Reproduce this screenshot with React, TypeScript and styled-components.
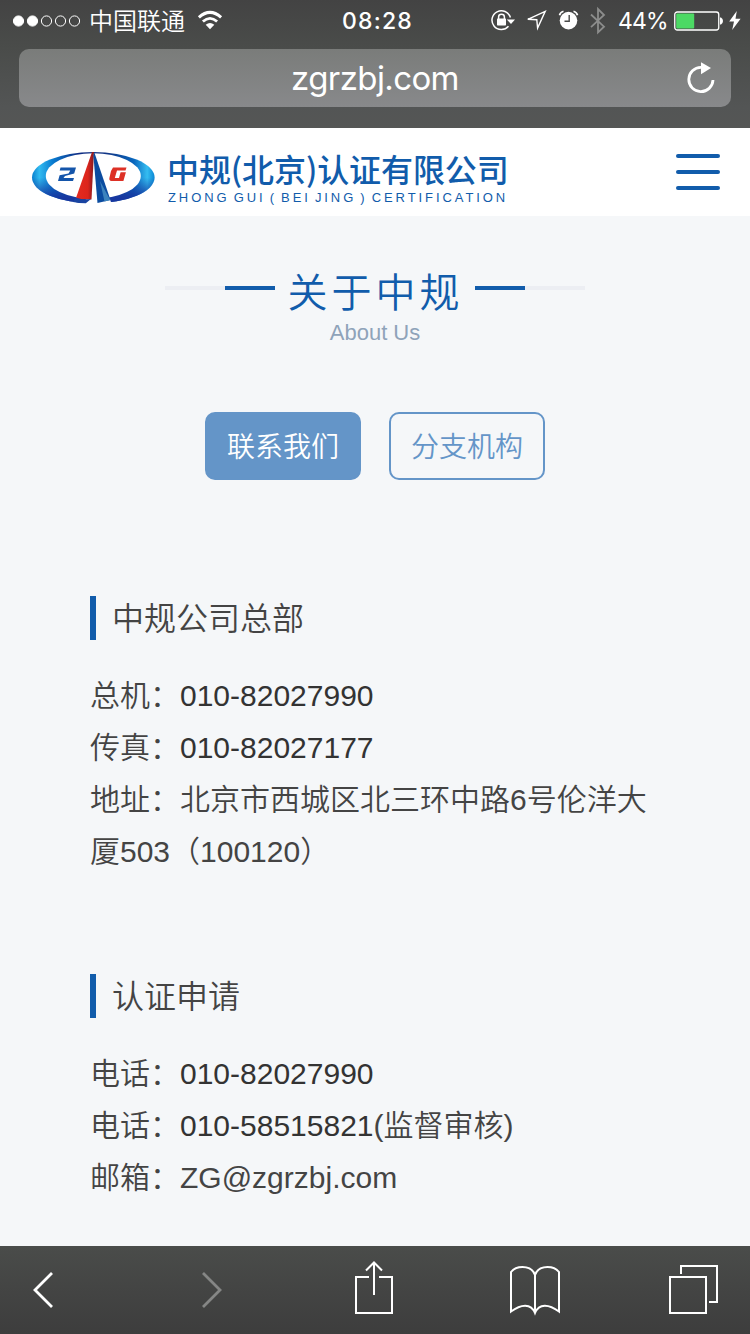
import React from "react";
import styled, { createGlobalStyle } from "styled-components";

const cjk = `"Noto Sans CJK SC", sans-serif`;
const BLUE = "#115cab";

const GlobalStyle = createGlobalStyle`
  body { margin: 0; background: #f5f7f9; }
  * { box-sizing: border-box; }
  svg { display: block; flex: none; overflow: visible; }
`;

const Screen = styled.div`
  width: 750px;
  height: 1334px;
  display: flex;
  flex-direction: column;
  overflow: hidden;
  background: #f5f7f9;
  font-family: "Liberation Sans", ${cjk};
`;

const BrowserTop = styled.header`
  height: 128px;
  flex: none;
  background: linear-gradient(#434343 0, #4a4c4a 48px, #535555 107px, #555655 128px);
`;

const StatusBar = styled.div`
  height: 49px;
  padding-bottom: 8px;
  display: flex;
  align-items: center;
  color: #fff;
`;

const StatusLeft = styled.div`
  width: 342px;
  padding-left: 13px;
  display: flex;
  align-items: center;
`;

const Carrier = styled.span`
  margin: -2px 13px 0 9px;
  font: 400 24px/36px ${cjk};
  font-weight: 350;
`;

const Clock = styled.span`
  width: 148.5px;
  font: 500 23px/36px Inter, sans-serif;
  letter-spacing: 1.2px;
`;

const StatusRight = styled.div`
  display: flex;
  align-items: center;
`;

const Percent = styled.span`
  width: 55.5px;
  margin-left: -0.5px;
  font: 400 23px/36px Inter, sans-serif;
  letter-spacing: -0.9px;
`;

const AddressBar = styled.div`
  height: 58px;
  margin: 0 19px;
  padding: 0 14px 0 44px;
  display: flex;
  align-items: center;
  border-radius: 10px;
  background: linear-gradient(#7a7c7a, #88898b);
  color: #fff;
`;

const Host = styled.span`
  flex: 1;
  text-align: center;
  font: 400 33px/56px Inter, sans-serif;
  letter-spacing: -0.6px;
`;

const SiteHeader = styled.div`
  height: 88px;
  flex: none;
  padding: 0 30px 0 31px;
  display: flex;
  justify-content: space-between;
  align-items: center;
  background: #fff;
`;

const Brand = styled.div`
  display: flex;
  align-items: center;
  color: ${BLUE};
`;

const BrandMark = styled.div`
  padding-top: 13px;
`;

const BrandText = styled.div`
  margin-left: 11px;
  padding-top: 12px;
  white-space: nowrap;
`;

const BrandName = styled.div`
  font: 500 32px/36px ${cjk};
  letter-spacing: -0.1px;
`;

const BrandLatin = styled.div`
  margin: 4px 0 0 1px;
  font: 400 13px/16px "Liberation Sans", sans-serif;
  letter-spacing: 2.92px;
  word-spacing: -2.4px;
`;

const Menu = styled.div`
  height: 36px;
  display: flex;
  flex-direction: column;
  justify-content: space-between;
`;

const MenuLine = styled.i`
  width: 44px;
  height: 4px;
  border-radius: 2px;
  background: ${BLUE};
`;

const Content = styled.main`
  height: 1030px;
  flex: none;
  display: flex;
  flex-direction: column;
  overflow: hidden;
`;

const TitleRow = styled.div`
  margin-top: 46px;
  height: 60px;
  display: flex;
  justify-content: center;
`;

const Rule = styled.div<{ $side: "left" | "right" }>`
  width: 110px;
  height: 4px;
  margin-top: 24px;
  background: linear-gradient(
    to ${(p) => p.$side},
    ${BLUE} 50px,
    #eceef3 50px
  );
`;

const Title = styled.h1`
  width: 200px;
  margin: 0;
  padding-left: 1px;
  text-align: center;
  font: 400 40px/56px ${cjk};
  font-weight: 350;
  letter-spacing: 4px;
  color: ${BLUE};
`;

const Subtitle = styled.div`
  margin-top: -2px;
  text-align: center;
  font-size: 22px;
  line-height: 26px;
  color: #8fa3b9;
`;

const Tabs = styled.div`
  margin-top: 66px;
  display: flex;
  justify-content: center;
  gap: 28px;
`;

const Tab = styled.button<{ $active?: boolean }>`
  width: 156px;
  height: 68px;
  padding: 0 0 2px;
  border: 2px solid #6495c8;
  border-radius: 10px;
  background: ${(p) => (p.$active ? "#6495c8" : "transparent")};
  color: ${(p) => (p.$active ? "#fff" : "#6495c8")};
  font: 400 28px/62px ${cjk};
  font-weight: 350;
`;

const Section = styled.section<{ $top: number }>`
  width: 570px;
  margin: ${(p) => p.$top}px 0 0 90px;
`;

const Heading = styled.h2`
  height: 44px;
  margin: 0 0 30px;
  padding-left: 16px;
  border-left: 6px solid ${BLUE};
  font: 400 32px/41px ${cjk};
  font-weight: 350;
  color: #444;
`;

const Line = styled.p`
  margin: 0;
  font-size: 30px;
  line-height: 52px;
  font-weight: 350;
  color: #444;
`;

const Phone = styled.span`
  color: #333;
`;

const Toolbar = styled.nav`
  height: 88px;
  flex: none;
  display: flex;
  align-items: center;
  background: linear-gradient(#4a4c4a, #3d3d3d);
`;

const Tool = styled.span<{ $gap: number }>`
  width: 52px;
  height: 60px;
  margin-left: ${(p) => p.$gap}px;
`;

const ToolIcon = ({ children, gap, color = "#fff" }: { children: React.ReactNode; gap: number; color?: string }) => (
  <Tool $gap={gap}>
    <svg width="52" height="60" fill="none" stroke={color} strokeWidth="2">
      {children}
    </svg>
  </Tool>
);

const Signal = () => (
  <svg width="67" height="12" fill="#fff" stroke="#fff">
    {[0, 1, 2, 3, 4].map((i) => (
      <circle key={i} cx={5.5 + i * 14} cy="6" r="5.1" fill={i < 2 ? "#fff" : "none"} />
    ))}
  </svg>
);

const Wifi = () => (
  <svg width="24" height="19" fill="none" stroke="#fff">
    <path d="M0.9 6.4Q12-3.6 23.1 6.4" strokeWidth="3" />
    <path d="M4.9 10.5Q12 4.3 19.1 10.5" strokeWidth="2.8" />
    <path d="M12 18.3L7.7 13.8Q12 10.2 16.3 13.8Z" fill="#fff" stroke="none" />
  </svg>
);

const RotationLock = () => (
  <svg width="36" height="24" fill="none" stroke="#fff">
    <path d="M19.4 8.5A9.4 9.4 0 1 0 17.5 17.3" strokeWidth="1.5" />
    <path d="M15.8 10.5H24L20 15Z" fill="#fff" stroke="none" />
    <rect x="6" y="9.5" width="9" height="7" rx="0.7" fill="#fff" stroke="none" />
    <path d="M7.6 10V8Q7.6 5.3 10.5 5.3T13.4 8V10" strokeWidth="1.5" />
  </svg>
);

const Location = () => (
  <svg width="32" height="22" fill="none" stroke="#fff" strokeWidth="1.4">
    <path d="M0.8 9.3L18.2 1.4L10.6 18L9.8 9.7Z" />
  </svg>
);

const Alarm = () => (
  <svg width="31" height="22" fill="none" stroke="#fff">
    <circle cx="9.5" cy="10.6" r="8.8" fill="#fff" stroke="none" />
    <path d="M10.2 5V11.2H5.5" stroke="#4a4b4a" strokeWidth="1.4" />
    <path d="M0.5 5.2Q1.2 2.2 4.5 1.3M18.5 5.2Q17.8 2.2 14.5 1.3" strokeWidth="1.7" />
  </svg>
);

const Bluetooth = () => (
  <svg width="29" height="28" fill="none" stroke="#8c8d8c" strokeWidth="1.8">
    <path d="M1 7.5L14 19.7L8 25.5V2L14 8L1 20.2" />
  </svg>
);

const Battery = () => (
  <svg width="55" height="20">
    <rect x="0.75" y="1" width="44" height="18" rx="2.5" fill="none" stroke="#fff" strokeWidth="1.3" />
    <rect x="2.2" y="2.6" width="18" height="14.8" rx="1" fill="#4cd964" />
    <path d="M46 6.5H47Q49 7.5 49 10T47 13.5H46Z" fill="#fff" />
  </svg>
);

const Bolt = () => (
  <svg width="12" height="20" fill="#fff">
    <path d="M7.8 0L0.2 10.5H5L3.2 19L11.6 7.7H6.5Z" />
  </svg>
);

const Reload = () => (
  <svg width="30" height="34" fill="none" stroke="#fff">
    <path d="M14 6.4A12.1 12.1 0 1 0 26 19" strokeWidth="2.8" />
    <path d="M14 1.3L24 7.1L14 13.3Z" fill="#fff" stroke="none" />
  </svg>
);

const LogoMark = () => (
  <svg width="125" height="54" viewBox="0 0 125 54">
    <defs>
      <linearGradient id="ring" x1="0" x2="1">
        <stop offset="0" stopColor="#087fce" />
        <stop offset=".06" stopColor="#31baf0" />
        <stop offset=".17" stopColor="#087bd0" />
        <stop offset=".38" stopColor="#102c83" />
        <stop offset=".62" stopColor="#123787" />
        <stop offset=".83" stopColor="#0866bd" />
        <stop offset=".94" stopColor="#35bdf1" />
        <stop offset="1" stopColor="#0b87d4" />
      </linearGradient>
      <linearGradient id="lower" x1="0" y1="0" x2="0" y2="1">
        <stop offset=".5" stopColor="#1441a5" stopOpacity="0" />
        <stop offset=".9" stopColor="#1737a0" />
      </linearGradient>
      <linearGradient id="red" x1="0" x2="1">
        <stop offset="0" stopColor="#e52b20" />
        <stop offset=".65" stopColor="#dc251c" />
        <stop offset="1" stopColor="#811a20" />
      </linearGradient>
    </defs>
    <ellipse cx="62.3" cy="25.6" rx="61.3" ry="25.6" fill="url(#ring)" />
    <ellipse cx="62.3" cy="25.6" rx="61.3" ry="25.6" fill="url(#lower)" />
    <ellipse cx="62.3" cy="24" rx="47.5" ry="22.8" fill="#fff" />
    <path d="M62 0L54 53H81Z" fill="#fff" />
    <path d="M45.5 44.5L61 0H63L60.5 47.5Q53 48 45.5 46Z" fill="url(#red)" />
    <path d="M44 46.3Q52 48 60 47L54.8 51.3Q48 51.2 42 50Z" fill="#1944a1" />
    <path d="M63.2 0L79.5 48L66.5 51L62.4 4Z" fill="#0b4ca0" />
    <path d="M69 29L78.4 46.6L79.5 48L73.5 49.5Z" fill="#3c83bd" />
    <path d="M29.5 15.5H45L43.2 21.6L34 24L32.5 26H43L42 29H27L28.6 23.3L37.5 21.5L39.3 18.4H28.7Z" fill="#1455aa" />
    <path d="M82 15.5H95.5L94.5 18.5H86L83.8 26H88L89.6 20.2H94.9L92.4 29H80.5Q77.6 29 78.5 25.6L80 19Z" fill="#dd3126" />
  </svg>
);

export default function App() {
  return (
    <Screen>
      <GlobalStyle />
      <BrowserTop>
        <StatusBar>
          <StatusLeft>
            <Signal />
            <Carrier>中国联通</Carrier>
            <Wifi />
          </StatusLeft>
          <Clock>08:28</Clock>
          <StatusRight>
            <RotationLock />
            <Location />
            <Alarm />
            <Bluetooth />
            <Percent>44%</Percent>
            <Battery />
            <Bolt />
          </StatusRight>
        </StatusBar>
        <AddressBar>
          <Host>zgrzbj.com</Host>
          <Reload />
        </AddressBar>
      </BrowserTop>

      <SiteHeader>
        <Brand>
          <BrandMark>
            <LogoMark />
          </BrandMark>
          <BrandText>
            <BrandName>中规(北京)认证有限公司</BrandName>
            <BrandLatin>ZHONG GUI ( BEI JING ) CERTIFICATION</BrandLatin>
          </BrandText>
        </Brand>
        <Menu>
          <MenuLine />
          <MenuLine />
          <MenuLine />
        </Menu>
      </SiteHeader>

      <Content>
        <TitleRow>
          <Rule $side="left" />
          <Title>关于中规</Title>
          <Rule $side="right" />
        </TitleRow>
        <Subtitle>About Us</Subtitle>
        <Tabs>
          <Tab $active>联系我们</Tab>
          <Tab>分支机构</Tab>
        </Tabs>

        <Section $top={116}>
          <Heading>中规公司总部</Heading>
          <Line>总机：<Phone>010-82027990</Phone></Line>
          <Line>传真：<Phone>010-82027177</Phone></Line>
          <Line>地址：北京市西城区北三环中路6号伦洋大厦503（100120）</Line>
        </Section>
        <Section $top={96}>
          <Heading>认证申请</Heading>
          <Line>电话：<Phone>010-82027990</Phone></Line>
          <Line>电话：<Phone>010-58515821</Phone>(监督审核)</Line>
          <Line>邮箱：ZG@zgrzbj.com</Line>
        </Section>
      </Content>

      <Toolbar>
        <ToolIcon gap={17}>
          <path d="M35 13L18 30L35 47" strokeWidth="2.8" />
        </ToolIcon>
        <ToolIcon gap={117} color="#858685">
          <path d="M17 13L34 30L17 47" strokeWidth="2.8" />
        </ToolIcon>
        <ToolIcon gap={110}>
          <path d="M21 17H8V53H44V17H31M26 2.5V35M18 10.5L26 2.5L34 10.5" />
        </ToolIcon>
        <ToolIcon gap={109}>
          <path d="M26 53V15C24 9 19 7 13.5 7Q6 7 2 12V51.5C12 44 22 43 26 53C30 43 40 44 50 51.5V12Q46 7 38.5 7C33 7 28 9 26 15" />
        </ToolIcon>
        <ToolIcon gap={107}>
          <path d="M2 17H38V53H2ZM13 14V6H49V42H41" />
        </ToolIcon>
      </Toolbar>
    </Screen>
  );
}
